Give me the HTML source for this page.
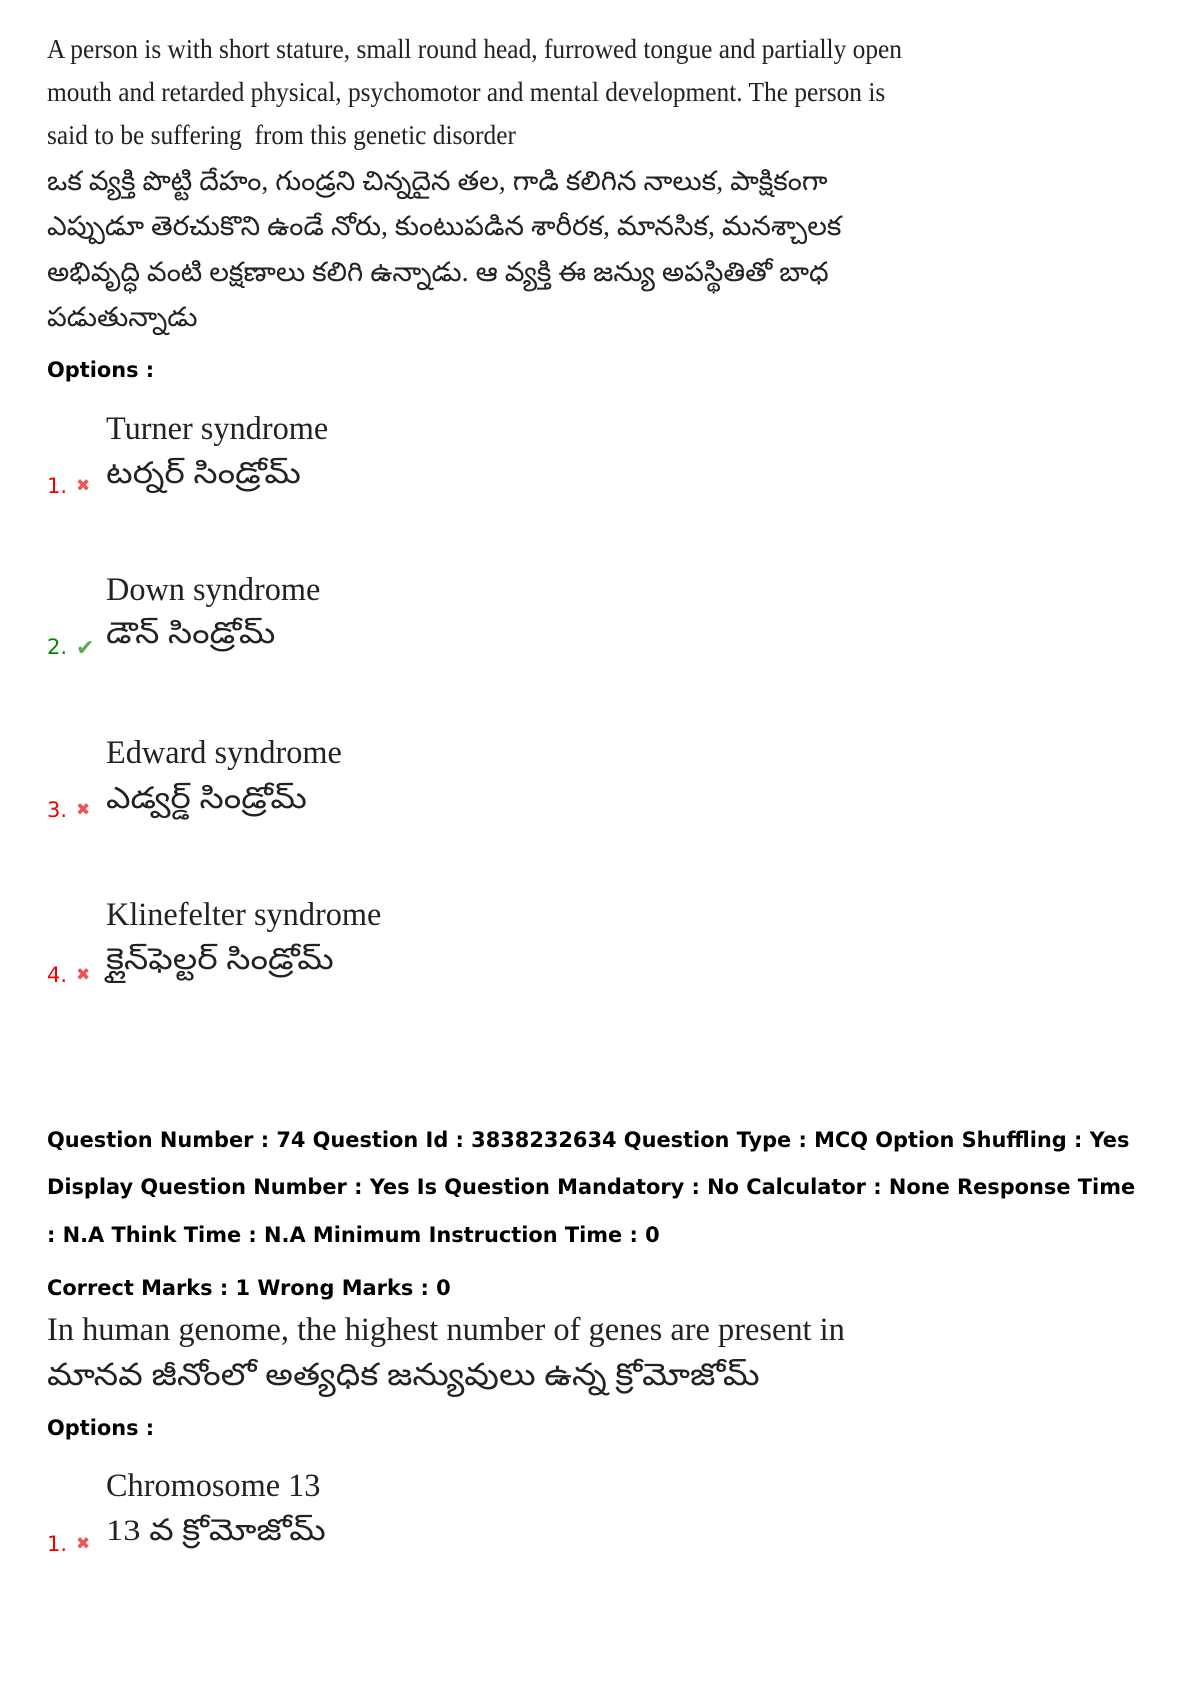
<!DOCTYPE html>
<html><head><meta charset="utf-8"><style>
body{margin:0;width:1190px;height:1684px;background:#fff;position:relative;overflow:hidden}
.l{position:absolute;left:47px;white-space:nowrap;line-height:1}
.t{font-family:"Liberation Serif",serif;color:#222;font-size:27px;transform:scaleX(.94);transform-origin:left}
.te{font-family:"Liberation Serif","Noto Sans CJK SC",sans-serif;color:#222;font-size:27px;transform:scaleX(1.03);transform-origin:left}
.b{font-family:"DejaVu Sans","Liberation Sans",sans-serif;font-weight:bold;font-size:20.9px;color:#000;letter-spacing:0}
.o{font-family:"Liberation Serif",serif;color:#222;font-size:32.3px;left:106px}
.ot{font-family:"Liberation Serif",serif;color:#222;font-size:30px;left:106px;transform:scaleX(1.15);transform-origin:left}
.n{font-family:"DejaVu Sans",sans-serif;font-size:21px;color:#e00}
.n.g{color:#080}
.i{position:absolute;font-size:17px;left:76px}
</style></head><body>
<div class="l t" style="top:36px">A person is with short stature, small round head, furrowed tongue and partially open</div>
<div class="l t" style="top:79px">mouth and retarded physical, psychomotor and mental development. The person is</div>
<div class="l t" style="top:122px">said to be suffering&nbsp; from this genetic disorder</div>
<div class="l te" style="top:168px">ఒక వ్యక్తి పొట్టి దేహం, గుండ్రని చిన్నదైన తల, గాడి కలిగిన నాలుక, పాక్షికంగా</div>
<div class="l te" style="top:213px">ఎప్పుడూ తెరచుకొని ఉండే నోరు, కుంటుపడిన శారీరక, మానసిక, మనశ్చాలక</div>
<div class="l te" style="top:259px">అభివృద్ధి వంటి లక్షణాలు కలిగి ఉన్నాడు. ఆ వ్యక్తి ఈ జన్యు అపస్థితితో బాధ</div>
<div class="l te" style="top:304px">పడుతున్నాడు</div>
<div class="l b" style="top:360px">Options :</div>

<div class="l o" style="top:412px">Turner syndrome</div>
<div class="l ot" style="top:459px">టర్నర్ సిండ్రోమ్</div>
<div class="l n" style="top:476px">1.</div><div class="i" style="top:476px;color:#e55">✖</div>

<div class="l o" style="top:573px">Down syndrome</div>
<div class="l ot" style="top:619px">డౌన్ సిండ్రోమ్</div>
<div class="l n g" style="top:637px">2.</div><div class="i" style="top:635px;color:#5a5;font-size:22px">✔</div>

<div class="l o" style="top:736px">Edward syndrome</div>
<div class="l ot" style="top:784px">ఎడ్వర్డ్ సిండ్రోమ్</div>
<div class="l n" style="top:800px">3.</div><div class="i" style="top:800px;color:#e55">✖</div>

<div class="l o" style="top:898px">Klinefelter syndrome</div>
<div class="l ot" style="top:945px">క్లైన్‌ఫెల్టర్ సిండ్రోమ్</div>
<div class="l n" style="top:965px">4.</div><div class="i" style="top:965px;color:#e55">✖</div>

<div class="l b" style="top:1130px">Question Number : 74 Question Id : 3838232634 Question Type : MCQ Option Shuffling : Yes</div>
<div class="l b" style="top:1177px">Display Question Number : Yes Is Question Mandatory : No Calculator : None Response Time</div>
<div class="l b" style="top:1225px">: N.A Think Time : N.A Minimum Instruction Time : 0</div>
<div class="l b" style="top:1278px">Correct Marks : 1 Wrong Marks : 0</div>
<div class="l o" style="top:1314px;left:47px;font-size:32.4px">In human genome, the highest number of genes are present in</div>
<div class="l ot" style="top:1359px;left:47px;font-size:31px;transform:scaleX(1.12)">మానవ జీనోంలో అత్యధిక జన్యువులు ఉన్న క్రోమోజోమ్</div>
<div class="l b" style="top:1418px">Options :</div>
<div class="l o" style="top:1469px">Chromosome 13</div>
<div class="l ot" style="top:1516px">13 వ క్రోమోజోమ్</div>
<div class="l n" style="top:1534px">1.</div><div class="i" style="top:1534px;color:#e55">✖</div>
</body></html>
